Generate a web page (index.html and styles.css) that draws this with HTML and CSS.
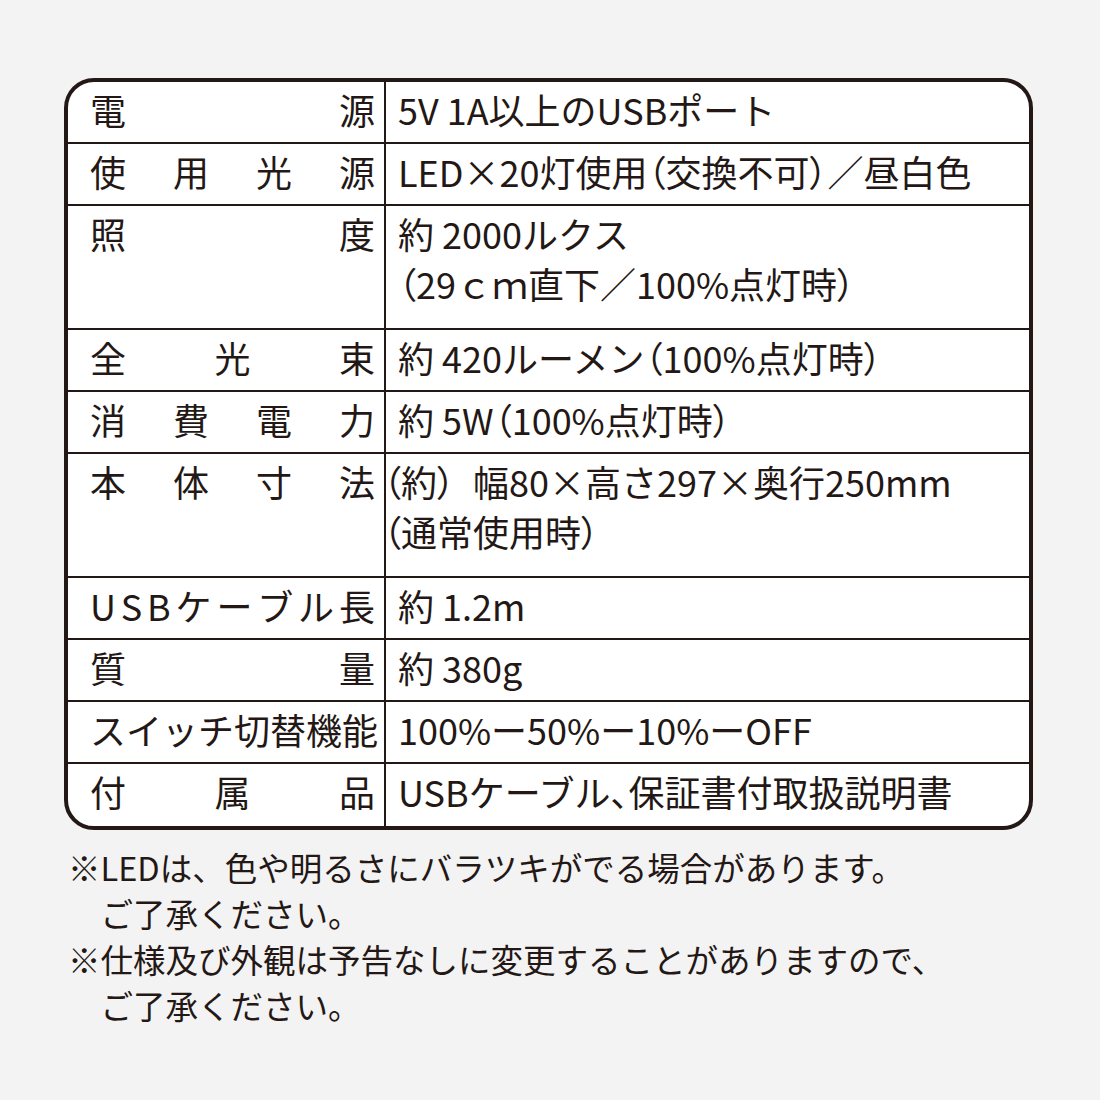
FILE: index.html
```html
<!DOCTYPE html>
<html lang="ja">
<head>
<meta charset="utf-8">
<title>仕様</title>
<link rel="stylesheet" href="styles.css">
</head>
<body>
<div class="page">
  <div class="spec">
    <div class="row">
      <div class="label"><span>電</span><span>源</span></div>
      <div class="value">5V 1A以上のUSBポート</div>
    </div>
    <div class="row">
      <div class="label"><span>使</span><span>用</span><span>光</span><span>源</span></div>
      <div class="value">LED×20灯使用<span class="p">（</span>交換不可<span class="p">）</span>／昼白色</div>
    </div>
    <div class="row tall">
      <div class="label"><span>照</span><span>度</span></div>
      <div class="value">
        <div>約 2000ルクス</div>
        <div><span class="p">（</span>29ｃｍ直下／100%点灯時<span class="p">）</span></div>
      </div>
    </div>
    <div class="row">
      <div class="label"><span>全</span><span>光</span><span>束</span></div>
      <div class="value">約 420ルーメン<span class="p">（</span>100%点灯時<span class="p">）</span></div>
    </div>
    <div class="row">
      <div class="label"><span>消</span><span>費</span><span>電</span><span>力</span></div>
      <div class="value">約 5W<span class="p">（</span>100%点灯時<span class="p">）</span></div>
    </div>
    <div class="row tall">
      <div class="label"><span>本</span><span>体</span><span>寸</span><span>法</span></div>
      <div class="value">
        <div class="hang"><span class="p">（</span>約<span class="p">）</span>&ensp;幅80×高さ297×奥行250mm</div>
        <div class="hang"><span class="p">（</span>通常使用時<span class="p">）</span></div>
      </div>
    </div>
    <div class="row">
      <div class="label"><span>U</span><span>S</span><span>B</span><span>ケ</span><span>ー</span><span>ブ</span><span>ル</span><span>長</span></div>
      <div class="value">約 1.2m</div>
    </div>
    <div class="row">
      <div class="label"><span>質</span><span>量</span></div>
      <div class="value">約 380g</div>
    </div>
    <div class="row">
      <div class="label"><span>ス</span><span>イ</span><span>ッ</span><span>チ</span><span>切</span><span>替</span><span>機</span><span>能</span></div>
      <div class="value">100%ー50%ー10%ーOFF</div>
    </div>
    <div class="row last">
      <div class="label"><span>付</span><span>属</span><span>品</span></div>
      <div class="value">USBケーブル<span class="p">、</span>保証書付取扱説明書</div>
    </div>
  </div>
  <div class="notes">
    <p>※LEDは、色や明るさにバラツキがでる場合があります。</p>
    <p class="indent">ご了承ください。</p>
    <p>※仕様及び外観は予告なしに変更することがありますので、</p>
    <p class="indent">ご了承ください。</p>
  </div>
</div>
</body>
</html>
```

FILE: styles.css
```css
html, body {
  margin: 0;
  padding: 0;
  background: #f3f3f3;
}

body {
  font-family: "Noto Sans CJK JP", "Noto Sans", sans-serif;
  font-weight: 400;
  color: #231815;
}

.page {
  padding: 78px 0 0 64px;
}

.spec {
  box-sizing: border-box;
  width: 969px;
  border: 4px solid #231815;
  border-radius: 30px;
  background: #ffffff;
  overflow: hidden;
}

.row {
  display: grid;
  grid-template-columns: 318px 1fr;
  height: 60px;
  border-bottom: 2px solid #231815;
  font-size: 36px;
  line-height: 50px;
}

.row.tall {
  height: 122px;
}

.row.last {
  height: 62px;
  border-bottom: none;
}

.label {
  box-sizing: border-box;
  display: flex;
  justify-content: space-between;
  align-items: flex-start;
  padding: 2px 9px 0 22px;
  border-right: 2px solid #231815;
}

.value {
  padding: 2px 0 0 12px;
  white-space: nowrap;
}

.p {
  font-feature-settings: "palt";
}

.hang {
  margin-left: -15px;
}

.notes {
  margin-top: 14px;
  font-size: 32.5px;
  line-height: 46px;
}

.notes p {
  margin: 0 0 0 4px;
}

.notes p.indent {
  padding-left: 1em;
}
```
